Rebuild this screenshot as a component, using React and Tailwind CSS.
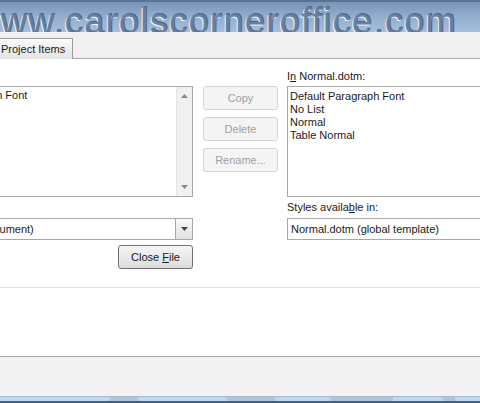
import React from 'react'

const ui = { fontFamily: '"Liberation Sans", Arial, sans-serif' }

const styles = ['Default Paragraph Font', 'No List', 'Normal', 'Table Normal']

function Btn({ children, disabled }) {
  return (
    <div
      className={`w-[75px] h-[24px] flex items-center justify-center rounded-[3px] border text-[11px] ${
        disabled
          ? 'border-[#d4d4d4] bg-[#f4f4f4] text-[#a0a0a0]'
          : 'border-[#707070] bg-gradient-to-b from-[#f6f6f6] to-[#dcdcdc] text-[#1a1a1a]'
      }`}
    >
      {children}
    </div>
  )
}

export default function App() {
  const site = 'www.carolscorneroffice.com'
  return (
    <div className="w-[480px] h-[403px] overflow-hidden flex flex-col bg-white" style={ui}>
      {/* watermark banner */}
      <div className="relative h-[32px] shrink-0 bg-gradient-to-b from-[#7893b8] via-[#93aecf] to-[#a6bedb] border-t-2 border-[#5a7392]">
        <div className="absolute left-[-27px] top-[-7px] whitespace-nowrap text-[36px] tracking-[1.4px] text-[#67809e] [text-shadow:-1px_1px_0_#f2f6fb,1px_-1px_0_#4d6786]">
          {site}
        </div>
      </div>
      {/* tab strip */}
      <div className="relative h-[27px] shrink-0 bg-[#f0f0f0] border-b border-[#a8a8a8] flex items-end">
        <div className="absolute left-[-27px] top-[-10px] h-[10px] overflow-hidden">
          <div className="whitespace-nowrap text-[36px] leading-[36px] tracking-[1.4px] text-[#ffffff] -scale-y-100 origin-top [text-shadow:0_0_2px_#8fadd0]">
            {site}
          </div>
        </div>
        <div className="relative ml-[-10px] h-[21px] w-[83px] pl-[10px] flex items-center whitespace-nowrap border border-b-0 border-[#9c9c9c] bg-gradient-to-b from-[#fbfbfb] to-[#e4e4e4] text-[11px] text-[#1a1a1a] mb-[-1px]">
          Project Items
        </div>
      </div>

      {/* dialog body */}
      <div className="h-[229px] shrink-0 border-b border-[#e2e2e2] flex pt-[10px]">
        {/* left column */}
        <div className="ml-[-107px] w-[300px] shrink-0 flex flex-col">
          <div className="h-[17px]" />
          <div className="h-[111px] border border-[#a8a8a8] flex">
            <div className="flex-1 pt-[2px] text-[11px] leading-[13px] text-[#1a1a1a] pl-[19px] whitespace-nowrap">
              Default Paragraph Font
            </div>
            <div className="w-[16px] bg-[#f0f0f0] border-l border-[#e4e4e4] flex flex-col items-center justify-between py-[7px]">
              <svg width="7" height="4" viewBox="0 0 7 4"><path d="M0 4 L3.5 0 L7 4 Z" fill="#8a8a8a" /></svg>
              <svg width="7" height="4" viewBox="0 0 7 4"><path d="M0 0 L3.5 4 L7 0 Z" fill="#8a8a8a" /></svg>
            </div>
          </div>
          <div className="h-[21px]" />
          <div className="h-[22px] border border-[#a8a8a8] flex">
            <div className="flex-1 flex items-center pl-[23px] whitespace-nowrap text-[11px] text-[#1a1a1a]">
              Document1 (Document)
            </div>
            <div className="w-[17px] border-l border-[#a8a8a8] bg-gradient-to-b from-[#f8f8f8] to-[#e2e2e2] flex items-center justify-center">
              <svg width="7" height="4" viewBox="0 0 7 4"><path d="M0 0 L3.5 4 L7 0 Z" fill="#444" /></svg>
            </div>
          </div>
          <div className="mt-[5px] flex justify-end">
            <Btn>
              <span>
                Close <span className="underline">F</span>ile
              </span>
            </Btn>
          </div>
        </div>

        {/* middle buttons */}
        <div className="ml-[10px] w-[75px] shrink-0 flex flex-col gap-[7px] pt-[17px]">
          <Btn disabled>Copy</Btn>
          <Btn disabled>Delete</Btn>
          <Btn disabled>Rename...</Btn>
        </div>

        {/* right column */}
        <div className="ml-[9px] w-[230px] shrink-0 flex flex-col">
          <div className="h-[17px] text-[11px] leading-[13px] text-[#1a1a1a] pt-[1px]">
            I<span className="underline">n</span> Normal.dotm:
          </div>
          <div className="h-[111px] border border-[#a8a8a8] pl-[2px] pt-[3px] text-[11px] leading-[13px] text-[#1a1a1a]">
            {styles.map((s) => (
              <div key={s}>{s}</div>
            ))}
          </div>
          <div className="h-[21px] flex items-center text-[11px] text-[#1a1a1a]">
            Styles availa<span className="underline">b</span>le in:
          </div>
          <div className="h-[22px] border border-[#a8a8a8] flex items-center pl-[3px] text-[11px] text-[#1a1a1a]">
            Normal.dotm (global template)
          </div>
        </div>
      </div>

      <div className="h-[68px] shrink-0 bg-white" />
      {/* footer */}
      <div className="h-[40px] shrink-0 bg-[#f2f2f2] border-t border-[#a6a6ae]" />
      <div className="flex-1 bg-[#bcd8f4] border-t border-[#a9b7c6] border-b-2 border-b-[#46607e] flex items-start">
        <div className="ml-[110px] w-[28px] h-[4px] bg-[#b0c4d8]" />
        <div className="ml-[89px] w-[48px] h-[4px] bg-[#b0c4d8]" />
        <div className="ml-[55px] w-[63px] h-[4px] bg-[#b0c4d8]" />
        <div className="ml-[50px] w-[12px] h-[4px] bg-[#b0c4d8]" />
      </div>
    </div>
  )
}
